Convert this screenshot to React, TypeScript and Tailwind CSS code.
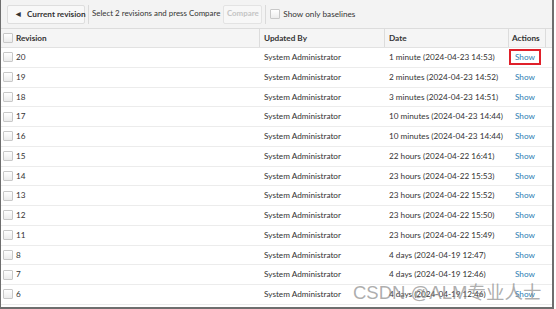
import React from 'react'

const rows = [
  ['20', '1 minute (2024-04-23 14:53)'],
  ['19', '2 minutes (2024-04-23 14:52)'],
  ['18', '3 minutes (2024-04-23 14:51)'],
  ['17', '10 minutes (2024-04-23 14:44)'],
  ['16', '10 minutes (2024-04-23 14:44)'],
  ['15', '22 hours (2024-04-22 16:41)'],
  ['14', '23 hours (2024-04-22 15:53)'],
  ['13', '23 hours (2024-04-22 15:52)'],
  ['12', '23 hours (2024-04-22 15:50)'],
  ['11', '23 hours (2024-04-22 15:49)'],
  ['8', '4 days (2024-04-19 12:47)'],
  ['7', '4 days (2024-04-19 12:46)'],
  ['6', '4 days (2024-04-19 12:46)'],
]

function Box() {
  return (
    <span className="block w-[10px] h-[10px] shrink-0 border border-[#c8c8c8] bg-gradient-to-b from-white to-[#ececec] rounded-[1px]" />
  )
}

export default function App() {
  return (
    <div className="w-[556px] h-[309px] bg-white overflow-hidden">
      <div
        className="relative w-[554px] h-[309px] border-l border-r-2 border-b-2 border-[#6e6e6e] overflow-hidden text-[#333] text-[8.2px] whitespace-nowrap"
        style={{ fontFamily: 'Lato, "Open Sans", sans-serif' }}
      >
        {/* Toolbar */}
        <div className="h-[29px] flex items-center bg-[#f3f3f3] border-b border-[#dcdcdc] pl-[6px]">
          <button className="h-[19px] w-[78px] flex items-center gap-[6px] pl-[8px] border border-[#dedede] bg-[#f8f8f8] rounded-[2px] font-bold text-[#333]">
            <span className="text-[6px] leading-none">◀</span>
            <span>Current revision</span>
          </button>
          <span className="w-px h-[19px] bg-[#dadada] ml-[3px]" />
          <span className="ml-[3px] text-[7.9px]">Select 2 revisions and press Compare</span>
          <button className="ml-[3px] h-[19px] w-[39px] border border-[#e3e3e3] bg-[#f7f7f7] rounded-[2px] font-bold text-[#c4c4c4] text-[7.9px]">
            Compare
          </button>
          <span className="w-px h-[19px] bg-[#dadada] ml-[3px]" />
          <span className="ml-[4px]"><Box /></span>
          <span className="ml-[3px]">Show only baselines</span>
        </div>

        {/* Header */}
        <div className="h-[19px] flex items-center bg-[#f5f5f5] border-b border-[#e2e2e2] font-bold">
          <div className="w-[258px] flex items-center gap-[3px] pl-[2px]">
            <Box />
            <span>Revision</span>
          </div>
          <div className="w-[125px] h-full flex items-center pl-[4px] border-l border-[#dcdcdc]">Updated By</div>
          <div className="w-[124px] h-full flex items-center pl-[4px] border-l border-[#dcdcdc]">Date</div>
          <div className="w-[38px] h-full flex items-center pl-[3px] border-l border-r border-[#dcdcdc]">Actions</div>
        </div>

        {/* Rows */}
        {rows.map(([rev, date], i) => (
          <div key={rev} className="h-[19.75px] flex items-center border-b border-[#ececec]">
            <div className="w-[258px] flex items-center gap-[3px] pl-[2px]">
              <Box />
              <span>{rev}</span>
            </div>
            <div className="w-[125px] pl-[5px]">System Administrator</div>
            <div className="w-[124px] pl-[5px]">{date}</div>
            <div className="w-[38px] pl-[1px]">
              <span
                className={
                  i === 0
                    ? 'inline-block px-[4px] leading-[12px] border-2 border-[#e0202a] text-[#2d7db3]'
                    : 'inline-block px-[6px] leading-[12px] text-[#2d7db3]'
                }
              >
                Show
              </span>
            </div>
          </div>
        ))}

        {/* Watermark */}
        <div
          className="absolute left-[352px] top-[282px] text-[18.5px] leading-[22px] text-[#8a8a8a]/70"
          style={{ fontFamily: '"Liberation Sans", "Noto Sans CJK SC", sans-serif' }}
        >
          CSDN @ALM专业人士
        </div>
      </div>
    </div>
  )
}
